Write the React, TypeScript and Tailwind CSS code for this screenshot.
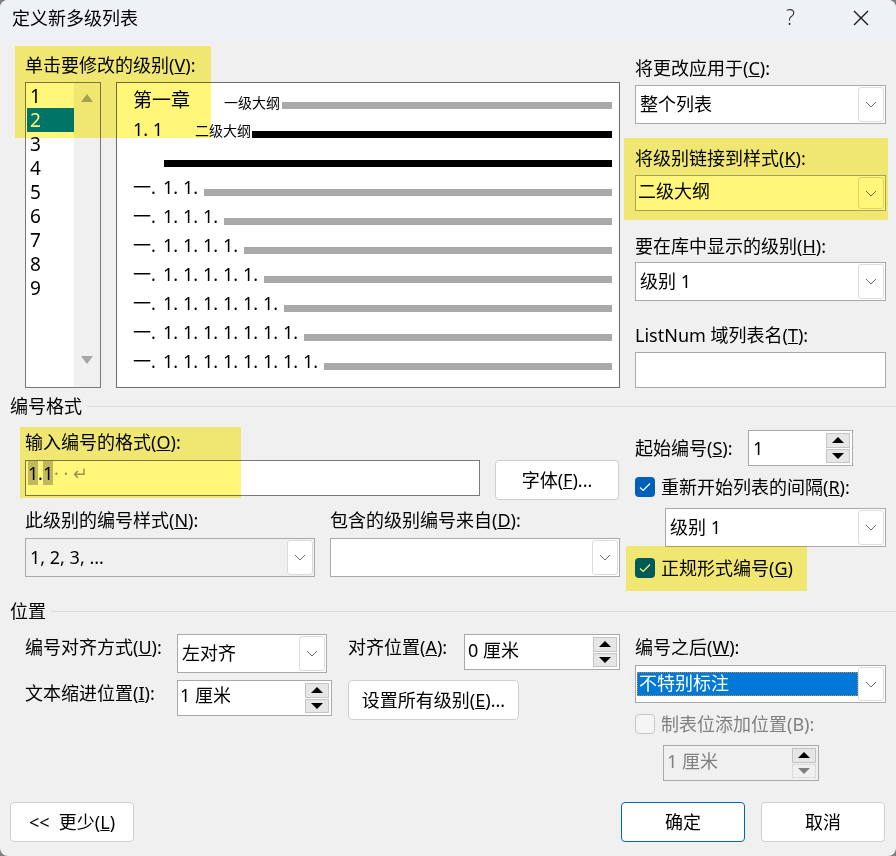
const FONT = { fontFamily: '"Noto Sans", "Noto Sans CJK SC", sans-serif' };

function Chevron() {
  return (
    <div className="flex w-[26px] shrink-0 items-center justify-center rounded-[3px] border border-[#dcdcdc] bg-white my-[1px] mr-[1px]">
      <svg width="12" height="7" viewBox="0 0 12 7" fill="none" stroke="#707070" strokeWidth="1">
        <path d="M1 1l5 5 5-5" />
      </svg>
    </div>
  );
}

function Combo({
  className,
  value,
  selected,
  gray,
  textClass = "pl-[4px]",
}: {
  className: string;
  value?: string;
  selected?: boolean;
  gray?: boolean;
  textClass?: string;
}) {
  return (
    <div className={`flex border border-[#a9a9a9] ${gray ? "bg-[#f0f0f0]" : "bg-white"} ${className}`}>
      <div className="flex min-w-0 flex-1 items-center">
        {selected ? (
          <div className="ml-[1px] flex h-[24px] flex-1 items-center bg-[#0078d7] pl-[2px] text-white outline-1 -outline-offset-1 outline-dotted outline-[#c88a3c]">
            <span className="-translate-y-[1px]">{value}</span>
          </div>
        ) : (
          <span className={textClass}>{value}</span>
        )}
      </div>
      <Chevron />
    </div>
  );
}

function Spinner({
  className,
  value,
  disabled,
  textClass = "-translate-y-[2px] pl-[3px]",
}: {
  className: string;
  value: string;
  disabled?: boolean;
  textClass?: string;
}) {
  return (
    <div
      className={`flex border border-[#a9a9a9] ${disabled ? "bg-[#f0f0f0] text-[#808080]" : "bg-white"} ${className}`}
    >
      <div className="flex flex-1 items-center">
        <span className={textClass}>{value}</span>
      </div>
      <div className="my-[2px] mr-[2px] flex w-[24px] flex-col gap-[1px]">
        <div className="flex flex-1 items-center justify-center border border-[#c4c4c4] bg-[#e6e6e6]">
          <svg width="12" height="6" viewBox="0 0 12 6">
            <path d="M6 0l6 6H0z" fill="#000" />
          </svg>
        </div>
        <div
          className={`flex flex-1 items-center justify-center border ${disabled ? "border-[#dcdcdc] bg-[#f0f0f0]" : "border-[#c4c4c4] bg-[#e6e6e6]"}`}
        >
          <svg width="12" height="6" viewBox="0 0 12 6">
            <path d="M0 0h12L6 6z" fill={disabled ? "#808080" : "#000"} />
          </svg>
        </div>
      </div>
    </div>
  );
}

function Label({ text, k, end = ":" }: { text: string; k: string; end?: string }) {
  return (
    <div className="h-[24px] whitespace-nowrap leading-[24px]">
      {text}(<u>{k}</u>){end}
    </div>
  );
}

function Button({ className, primary, children }: { className: string; primary?: boolean; children: React.ReactNode }) {
  return (
    <div
      className={`flex h-[40px] items-center justify-center rounded-[4px] border bg-white ${primary ? "border-[#0067c0]" : "border-[#d0d0d0]"} ${className}`}
    >
      {children}
    </div>
  );
}

function Check({ checked, disabled, label }: { checked?: boolean; disabled?: boolean; label: React.ReactNode }) {
  return (
    <div className={`flex h-[20px] items-center gap-[6px] ${disabled ? "text-[#808080]" : ""}`}>
      {checked ? (
        <div className="flex h-[20px] w-[20px] items-center justify-center rounded-[4px] bg-[#005fb8]">
          <svg width="12" height="10" viewBox="0 0 12 10" fill="none" stroke="#fff" strokeWidth="1.2">
            <path d="M1 5.5l3.2 3L11 1.5" />
          </svg>
        </div>
      ) : (
        <div className="h-[20px] w-[20px] rounded-[4px] border border-[#c8c8c8] bg-[#f5f5f5]" />
      )}
      <div className="whitespace-nowrap">{label}</div>
    </div>
  );
}

function Heading({ text }: { text: string }) {
  return (
    <div className="flex h-[24px] items-center gap-[5px] pl-[10px]">
      <span className="leading-[24px]">{text}</span>
      <div className="h-px flex-1 bg-[#dcdcdc]" />
    </div>
  );
}

function Bar({ black }: { black?: boolean }) {
  return <div className={`h-[7px] flex-1 translate-y-[2px] ${black ? "bg-black" : "bg-[#a9a9a9]"}`} />;
}

function LevelRow({ count }: { count: number }) {
  return (
    <div className="flex h-[29px] items-center">
      <div className="flex -translate-y-[3px]">
        <span className="w-[30px]">一.</span>
        {Array.from({ length: count }).map((_, i) => (
          <span key={i} className="w-[20px]">
            1.
          </span>
        ))}
      </div>
      <div className="w-[1px]" />
      <Bar />
    </div>
  );
}

function Highlight({ className }: { className: string }) {
  return <div className={`absolute bg-[#fff67a] mix-blend-multiply ${className}`} />;
}

export default function App() {
  return (
    <div className="h-[856px] w-[896px] bg-[#7f7f7f]">
      <div
        className="relative flex h-[856px] w-[896px] flex-col overflow-hidden rounded-[8px] bg-[#f0f0f0] text-[18px] text-black"
        style={FONT}
      >
        {/* Title bar */}
        <div className="flex h-[40px] shrink-0 items-center bg-[#eef2f7] pb-[5px] pl-[12px]">
          <span className="flex-1 leading-[36px]">定义新多级列表</span>
          <span className="mr-[58px] text-[21px] font-light text-[#333]">?</span>
          <svg width="16" height="16" viewBox="0 0 16 16" fill="none" stroke="#1a1a1a" strokeWidth="1.4" className="mr-[27px]">
            <path d="M1 1l14 14M15 1L1 15" />
          </svg>
        </div>

        {/* Level list + preview */}
        <div className="flex pl-[25px] pr-[10px]">
          <div className="flex w-[595px] shrink-0 flex-col pt-[13px]">
            <Label text="单击要修改的级别" k="V" />
            <div className="mt-[5px] flex gap-[15px]">
              <div className="flex h-[306px] w-[76px] border border-[#7a7a7a] bg-white">
                <div className="w-[48px] pt-[1px]">
                  {["1", "2", "3", "4", "5", "6", "7", "8", "9"].map((n) => (
                    <div
                      key={n}
                      className={`ml-[1px] h-[24px] pl-[3px] text-[19px] leading-[24px] ${n === "2" ? "bg-[#0078d7] text-white" : ""}`}
                    >
                      {n}
                    </div>
                  ))}
                </div>
                <div className="flex flex-1 flex-col items-center justify-between bg-[#f0f0f0] pb-[23px] pt-[11px]">
                  <svg width="12" height="8" viewBox="0 0 12 8">
                    <path d="M6 0l6 8H0z" fill="#a6a6a6" />
                  </svg>
                  <svg width="12" height="8" viewBox="0 0 12 8">
                    <path d="M0 0h12L6 8z" fill="#a6a6a6" />
                  </svg>
                </div>
              </div>
              <div className="h-[306px] w-[504px] border border-[#6e6e6e] bg-white pl-[16px] pr-[7px] pt-[6px]">
                <div className="flex h-[29px] items-center">
                  <span className="w-[91px] -translate-y-[3px] text-[19px]">第一章</span>
                  <span className="w-[58px] -translate-y-[1px] text-[14px]">一级大纲</span>
                  <Bar />
                </div>
                <div className="flex h-[29px] items-center">
                  <span className="w-[62px] -translate-y-[3px]">1. 1</span>
                  <span className="w-[57px] -translate-y-[2px] text-[14px]">二级大纲</span>
                  <Bar black />
                </div>
                <div className="flex h-[29px] items-center pl-[31px]">
                  <Bar black />
                </div>
                {[2, 3, 4, 5, 6, 7, 8].map((c) => (
                  <LevelRow key={c} count={c} />
                ))}
              </div>
            </div>
          </div>
          <div className="ml-[15px] flex flex-1 flex-col pt-[16px]">
            <Label text="将更改应用于" k="C" />
            <Combo className="mt-[5px] h-[39px]" value="整个列表" />
            <div className="mt-[22px]">
              <Label text="将级别链接到样式" k="K" />
            </div>
            <Combo className="mt-[5px] h-[36px]" value="二级大纲" textClass="-translate-y-[2px] pl-[2px]" />
            <div className="mt-[23px]">
              <Label text="要在库中显示的级别" k="H" />
            </div>
            <Combo className="mt-[4px] h-[39px]" value="级别 1" />
            <div className="mt-[22px]">
              <Label text="ListNum 域列表名" k="T" />
            </div>
            <div className="mt-[5px] h-[36px] border border-[#a9a9a9] bg-white" />
          </div>
        </div>

        {/* Number format */}
        <div className="mt-[6px]">
          <Heading text="编号格式" />
        </div>
        <div className="flex pl-[25px] pr-[10px]">
          <div className="w-[595px] shrink-0 pt-[12px]">
            <Label text="输入编号的格式" k="O" />
            <div className="mt-[6px] flex items-start gap-[15px]">
              <div className="flex h-[36px] w-[455px] items-start border border-[#7a7a7a] bg-white pl-[2px] leading-[24px]">
                <span className="w-[10px] bg-[#bfbfbf] text-center">1</span>
                <span className="w-[5px] text-center">.</span>
                <span className="w-[10px] bg-[#bfbfbf] text-center">1</span>
                <span className="ml-[1px] whitespace-pre text-[#9a9a9a]">· · ↵</span>
              </div>
              <Button className="w-[124px]">
                <span>
                  字体(<u>F</u>)...
                </span>
              </Button>
            </div>
            <div className="mt-[8px] flex gap-[15px]">
              <div className="w-[290px]">
                <Label text="此级别的编号样式" k="N" />
                <Combo className="mt-[6px] h-[39px]" value="1, 2, 3, ..." gray />
              </div>
              <div className="w-[290px]">
                <Label text="包含的级别编号来自" k="D" />
                <Combo className="mt-[6px] h-[39px]" />
              </div>
            </div>
          </div>
          <div className="ml-[15px] flex flex-1 flex-col pt-[12px]">
            <div className="flex items-center">
              <div className="w-[113px]">
                <Label text="起始编号" k="S" />
              </div>
              <Spinner className="h-[36px] w-[105px]" value="1" textClass="pl-[4px]" />
            </div>
            <div className="mt-[11px]">
              <Check
                checked
                label={
                  <>
                    重新开始列表的间隔(<u>R</u>):
                  </>
                }
              />
            </div>
            <Combo className="ml-[30px] mt-[11px] h-[39px]" value="级别 1" />
            <div className="mt-[11px]">
              <Check
                checked
                label={
                  <>
                    正规形式编号(<u>G</u>)
                  </>
                }
              />
            </div>
          </div>
        </div>

        {/* Position */}
        <div className="mt-[21px]">
          <Heading text="位置" />
        </div>
        <div className="flex pl-[25px] pr-[10px]">
          <div className="w-[595px] shrink-0 pt-[11px]">
            <div className="flex items-start">
              <div className="w-[152px] pt-[1px]">
                <Label text="编号对齐方式" k="U" />
              </div>
              <Combo className="h-[39px] w-[150px]" value="左对齐" />
              <div className="ml-[21px] w-[116px] pt-[1px]">
                <Label text="对齐位置" k="A" />
              </div>
              <Spinner className="h-[36px] w-[156px]" value="0 厘米" />
            </div>
            <div className="mt-[7px] flex items-start">
              <div className="w-[152px] pt-[1px]">
                <Label text="文本缩进位置" k="I" />
              </div>
              <Spinner className="h-[36px] w-[155px]" value="1 厘米" textClass="-translate-y-[3px] pl-[2px]" />
              <Button className="ml-[16px] w-[171px]">
                <span>
                  设置所有级别(<u>E</u>)...
                </span>
              </Button>
            </div>
          </div>
          <div className="ml-[15px] flex flex-1 flex-col pt-[12px]">
            <Label text="编号之后" k="W" />
            <Combo className="mt-[6px] h-[38px]" value="不特别标注" selected />
            <div className="mt-[11px]">
              <Check disabled label="制表位添加位置(B):" />
            </div>
            <Spinner className="ml-[28px] mt-[11px] h-[36px] w-[156px]" value="1 厘米" disabled />
          </div>
        </div>

        {/* Footer */}
        <div className="mt-auto flex pb-[14px] pl-[10px] pr-[11px]">
          <Button className="w-[124px]">
            <span className="whitespace-pre">
              &lt;&lt;  更少(<u>L</u>)
            </span>
          </Button>
          <div className="flex-1" />
          <Button primary className="w-[124px]">
            确定
          </Button>
          <Button className="ml-[16px] w-[124px]">取消</Button>
        </div>

        {/* Yellow marker annotations */}
        <Highlight className="left-[15px] top-[46px] h-[92px] w-[196px]" />
        <Highlight className="left-[624px] top-[138px] h-[82px] w-[264px]" />
        <Highlight className="left-[20px] top-[427px] h-[71px] w-[221px]" />
        <Highlight className="left-[626px] top-[546px] h-[45px] w-[181px]" />
      </div>
    </div>
  );
}
